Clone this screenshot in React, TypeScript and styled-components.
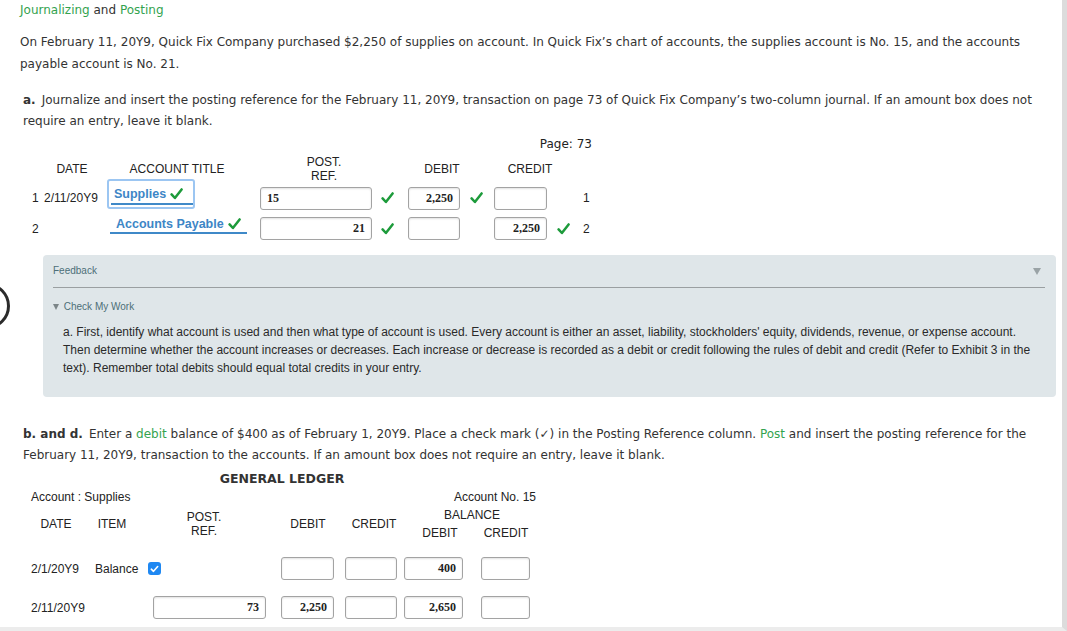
import styled, { createGlobalStyle } from 'styled-components';
import { FC, ReactNode } from 'react';

const GlobalStyle = createGlobalStyle`
	html, body {
		margin: 0;
		padding: 0;
		background: #fff;
	}
	body {
		font-family: 'DejaVu Sans', Verdana, sans-serif;
		color: #333;
	}
`;

const Check: FC = () => (
	<svg width='13' height='12' viewBox='0 0 13 12'>
		<path
			d='M1.6 6.4 L4.9 10 L11.6 1.4'
			fill='none'
			stroke='#1d9b3b'
			strokeWidth='2.5'
			strokeLinecap='round'
			strokeLinejoin='round'
		/>
	</svg>
);

interface IFieldProps {
	w: number;
	align?: 'left' | 'right';
	ml?: number;
	children?: ReactNode;
}

const FieldBox: FC<IFieldProps> = ({ w, align = 'right', ml = 0, children }) => (
	<Field $w={w} $align={align} $ml={ml}>
		{children}
	</Field>
);

const App: FC = () => {
	return (
		<Page>
			<GlobalStyle />
			<Ring />
			<Content>
				<Heading>
					<Green>Journalizing</Green> and <Green>Posting</Green>
				</Heading>
				<Prose $lh={22} $mt={12}>
					On February 11, 20Y9, Quick Fix Company purchased $2,250 of supplies on account. In Quick
					Fix’s chart of accounts, the supplies account is No. 15, and the accounts payable account is
					No. 21.
				</Prose>
				<Prose $lh={21} $mt={15} $indent={3}>
					<Lead>a.</Lead>Journalize and insert the posting reference for the February 11, 20Y9,
					transaction on page 73 of Quick Fix Company’s two-column journal. If an amount box does not
					require an entry, leave it blank.
				</Prose>

				<Journal>
					<PageNo>Page: 73</PageNo>
					<JHead>
						<span>DATE</span>
						<span>ACCOUNT TITLE</span>
						<span>
							POST.
							<br />
							REF.
						</span>
						<span>DEBIT</span>
						<span>CREDIT</span>
					</JHead>
					<JRow $h={38} $mt={-3}>
						<Num>1</Num>
						<Cell>2/11/20Y9</Cell>
						<AccountPick>
							<AccountText>
								Supplies <Check />
							</AccountText>
						</AccountPick>
						<FieldBox w={112} align='left'>
							15
						</FieldBox>
						<Mark $pl={9}>
							<Check />
						</Mark>
						<FieldBox w={52}>2,250</FieldBox>
						<Mark $pl={10}>
							<Check />
						</Mark>
						<FieldBox w={53} />
						<Tail>
							<Mark $pl={10} $hidden>
								<Check />
							</Mark>
							<EndNum>1</EndNum>
						</Tail>
					</JRow>
					<JRow $h={23}>
						<Num>2</Num>
						<Cell />
						<AccountLine>
							<AccountText $indent={6}>
								Accounts Payable <Check />
							</AccountText>
						</AccountLine>
						<FieldBox w={112}>21</FieldBox>
						<Mark $pl={9}>
							<Check />
						</Mark>
						<FieldBox w={52} />
						<Mark $pl={10} $hidden>
							<Check />
						</Mark>
						<FieldBox w={53}>2,250</FieldBox>
						<Tail>
							<Mark $pl={10}>
								<Check />
							</Mark>
							<EndNum>2</EndNum>
						</Tail>
					</JRow>
				</Journal>

				<Feedback>
					<FeedbackTop>
						<span>Feedback</span>
						<Caret />
					</FeedbackTop>
					<Divider />
					<CheckWork>
						<SmallCaret /> Check My Work
					</CheckWork>
					<Hint>
						a. First, identify what account is used and then what type of account is used. Every
						account is either an asset, liability, stockholders' equity, dividends, revenue, or expense
						account. Then determine whether the account increases or decreases. Each increase or
						decrease is recorded as a debit or credit following the rules of debit and credit (Refer to
						Exhibit 3 in the text). Remember total debits should equal total credits in your entry.
					</Hint>
				</Feedback>

				<Prose $lh={21} $mt={27} $indent={3}>
					<Lead>b. and d.</Lead>Enter a <Green>debit</Green> balance of $400 as of February 1, 20Y9.
					Place a check mark (✓) in the Posting Reference column. <Green>Post</Green> and insert the
					posting reference for the February 11, 20Y9, transaction to the accounts. If an amount box
					does not require an entry, leave it blank.
				</Prose>

				<Ledger>
					<LedgerTitle>GENERAL LEDGER</LedgerTitle>
					<AccountBar>
						<span>Account : Supplies</span>
						<span>Account No. 15</span>
					</AccountBar>
					<LHead>
						<span>DATE</span>
						<span>ITEM</span>
						<span>
							POST.
							<br />
							REF.
						</span>
						<span>DEBIT</span>
						<span>CREDIT</span>
						<Balance>
							<BalanceTitle>BALANCE</BalanceTitle>
							<BalanceCols>
								<span>DEBIT</span>
								<span>CREDIT</span>
							</BalanceCols>
						</Balance>
					</LHead>
					<LRow $mt={15}>
						<Cell>2/1/20Y9</Cell>
						<Cell>Balance</Cell>
						<Cell>
							<Tick>
								<svg width='9' height='8' viewBox='0 0 9 8'>
									<path
										d='M1.3 4.2 L3.5 6.3 L7.7 1.5'
										fill='none'
										stroke='#fff'
										strokeWidth='1.6'
										strokeLinecap='round'
										strokeLinejoin='round'
									/>
								</svg>
							</Tick>
						</Cell>
						<FieldBox w={53} />
						<FieldBox w={52} />
						<FieldBox w={59}>400</FieldBox>
						<FieldBox w={49} />
					</LRow>
					<LRow $mt={16}>
						<Cell>2/11/20Y9</Cell>
						<Cell />
						<Cell>
							<FieldBox w={113} ml={5}>
								73
							</FieldBox>
						</Cell>
						<FieldBox w={53}>2,250</FieldBox>
						<FieldBox w={52} />
						<FieldBox w={59}>2,650</FieldBox>
						<FieldBox w={49} />
					</LRow>
				</Ledger>
			</Content>
		</Page>
	);
};

const Page = styled.div`
	position: relative;
	box-sizing: border-box;
	width: 1067px;
	height: 631px;
	overflow: hidden;
	border-right: 5px solid #dcdcdc;
	border-bottom: 4px solid #ececec;
`;

const Ring = styled.div`
	position: absolute;
	left: -36px;
	top: 283px;
	width: 40px;
	height: 40px;
	border: 3px solid #2b2b2b;
	border-radius: 50%;
`;

const Content = styled.div`
	padding: 1px 0 0 20px;
	width: 1040px;
`;

const Heading = styled.div`
	font-size: 12px;
	line-height: 18px;
	color: #333;
`;

const Green = styled.span`
	color: #34a34f;
`;

const Lead = styled.b`
	font-weight: bold;
	margin-right: 6px;
`;

const Prose = styled.div<{ $lh: number; $mt: number; $indent?: number }>`
	font-size: 12px;
	line-height: ${p => p.$lh}px;
	margin-top: ${p => p.$mt}px;
	padding-left: ${p => p.$indent ?? 0}px;
`;

const Journal = styled.div`
	width: 590px;
	margin-top: 4px;
	font-family: 'Liberation Sans', Arial, sans-serif;
	font-size: 12px;
	color: #222;
`;

const PageNo = styled.div`
	font-family: 'DejaVu Sans', Verdana, sans-serif;
	text-align: right;
	line-height: 16px;
	padding-right: 18px;
`;

const JHead = styled.div`
	display: grid;
	grid-template-columns: 88px 122px 172px 64px 112px;
	align-items: center;
	height: 27px;
	margin-top: 3px;
	margin-left: 8px;
	line-height: 14px;
	text-align: center;
`;

const JRow = styled.div<{ $h: number; $mt?: number }>`
	display: grid;
	grid-template-columns: 16px 63px 153px 112px 36px 52px 34px 53px auto;
	align-items: center;
	height: ${p => p.$h}px;
	margin-top: ${p => p.$mt ?? 0}px;
	margin-left: 8px;
`;

const Num = styled.span`
	padding-left: 4px;
`;

const EndNum = styled.span`
	padding-left: 13px;
`;

const Cell = styled.span`
	display: flex;
	align-items: center;
`;

const AccountPick = styled.div`
	align-self: start;
	box-sizing: border-box;
	width: 88px;
	height: 30px;
	border: 2px solid #9cc6f2;
	border-radius: 3px;
	padding: 3px 0 0 2px;
`;

const AccountLine = styled.div`
	align-self: start;
	padding-left: 3px;
`;

const AccountText = styled.div<{ $indent?: number }>`
	display: flex;
	align-items: center;
	gap: 4px;
	box-sizing: border-box;
	width: 100%;
	height: 21px;
	padding-left: ${p => p.$indent ?? 3}px;
	border-bottom: 2px solid #3f89c8;
	color: #3d86c6;
	font-weight: bold;
	font-size: 12.5px;
	${AccountLine} & {
		width: 137px;
		height: 18px;
		margin-top: -1px;
	}
`;

const Field = styled.div<{ $w: number; $align: 'left' | 'right'; $ml: number }>`
	box-sizing: border-box;
	width: ${p => p.$w}px;
	height: 23px;
	margin-left: ${p => p.$ml}px;
	padding: 0 6px;
	border: 1px solid #a3a3a3;
	border-radius: 3px;
	box-shadow: inset 0 1px 2px rgba(0, 0, 0, 0.12);
	background: #fff;
	font-family: 'Liberation Serif', 'Times New Roman', serif;
	font-weight: bold;
	font-size: 12px;
	line-height: 21px;
	color: #222;
	text-align: ${p => p.$align};
`;

const Mark = styled.span<{ $pl: number; $hidden?: boolean }>`
	display: flex;
	align-items: center;
	padding-left: ${p => p.$pl}px;
	visibility: ${p => (p.$hidden ? 'hidden' : 'visible')};
`;

const Tail = styled.div`
	display: flex;
	align-items: center;
`;

const Feedback = styled.div`
	box-sizing: border-box;
	width: 1013px;
	height: 142px;
	margin: 15px 0 0 23px;
	padding: 9px 11px 0 10px;
	border-radius: 4px;
	background: #dfe6e9;
	font-family: 'Liberation Sans', Arial, sans-serif;
`;

const FeedbackTop = styled.div`
	display: flex;
	justify-content: space-between;
	align-items: center;
	font-size: 10px;
	line-height: 14px;
	color: #4d6f78;
`;

const Caret = styled.span`
	width: 0;
	height: 0;
	margin-right: 4px;
	border-left: 4px solid transparent;
	border-right: 4px solid transparent;
	border-top: 7px solid #9aa3a6;
`;

const SmallCaret = styled.span`
	display: inline-block;
	width: 0;
	height: 0;
	margin-right: 2px;
	border-left: 3px solid transparent;
	border-right: 3px solid transparent;
	border-top: 6px solid #7c8588;
`;

const Divider = styled.div`
	height: 1px;
	margin-top: 9px;
	background: #9a9fa1;
`;

const CheckWork = styled.div`
	margin-top: 12px;
	font-size: 10px;
	line-height: 14px;
	color: #4d6f78;
`;

const Hint = styled.div`
	margin-top: 9px;
	padding-left: 10px;
	font-size: 12px;
	line-height: 18px;
	color: #2a2a2a;
`;

const Ledger = styled.div`
	width: 520px;
	margin-left: 2px;
	font-family: 'Liberation Sans', Arial, sans-serif;
	font-size: 12px;
	color: #222;
`;

const LedgerTitle = styled.div`
	margin-top: 5px;
	font-family: 'DejaVu Sans', Verdana, sans-serif;
	font-weight: bold;
	font-size: 12.5px;
	line-height: 16px;
	text-align: center;
	color: #333;
`;

const AccountBar = styled.div`
	display: flex;
	justify-content: space-between;
	margin-top: 2px;
	padding-left: 9px;
	width: 505px;
	line-height: 16px;
`;

const LHead = styled.div`
	display: grid;
	grid-template-columns: 50px 62px 122px 86px 46px 150px;
	align-items: center;
	height: 36px;
	margin-top: 1px;
	padding-left: 9px;
	line-height: 14px;
	text-align: center;
`;

const Balance = styled.div`
	display: flex;
	flex-direction: column;
`;

const BalanceTitle = styled.span`
	box-sizing: border-box;
	width: 132px;
	padding-left: 18px;
	line-height: 18px;
`;

const BalanceCols = styled.div`
	display: grid;
	grid-template-columns: 86px 46px;
	line-height: 18px;
`;

const LRow = styled.div<{ $mt: number }>`
	display: grid;
	grid-template-columns: 64px 53px 133px 64px 59px 77px 49px;
	align-items: center;
	height: 23px;
	margin-top: ${p => p.$mt}px;
	padding-left: 9px;
`;

const Tick = styled.span`
	display: flex;
	align-items: center;
	justify-content: center;
	width: 13px;
	height: 13px;
	border-radius: 3px;
	background: #1f88f2;
`;

export default App;
